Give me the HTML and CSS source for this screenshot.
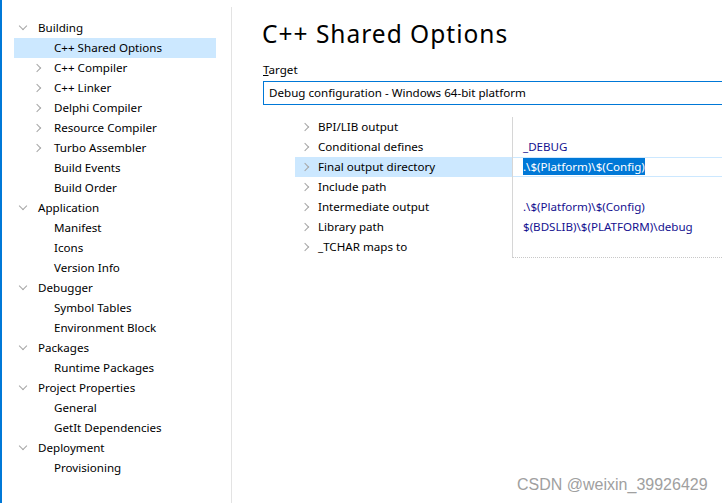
FILE: index.html
```html
<!DOCTYPE html>
<html lang="en">
<head>
    <meta charset="UTF-8">
    <title>C++ Shared Options</title>
    <link rel="stylesheet" href="styles.css">
</head>
<body>
    <div class="sidebar">
        <ul class="tree">
            <li class="node open">Building</li>
            <li class="leaf selected">C++ Shared Options</li>
            <li class="leaf closed">C++ Compiler</li>
            <li class="leaf closed">C++ Linker</li>
            <li class="leaf closed">Delphi Compiler</li>
            <li class="leaf closed">Resource Compiler</li>
            <li class="leaf closed">Turbo Assembler</li>
            <li class="leaf">Build Events</li>
            <li class="leaf">Build Order</li>
            <li class="node open">Application</li>
            <li class="leaf">Manifest</li>
            <li class="leaf">Icons</li>
            <li class="leaf">Version Info</li>
            <li class="node open">Debugger</li>
            <li class="leaf">Symbol Tables</li>
            <li class="leaf">Environment Block</li>
            <li class="node open">Packages</li>
            <li class="leaf">Runtime Packages</li>
            <li class="node open">Project Properties</li>
            <li class="leaf">General</li>
            <li class="leaf">GetIt Dependencies</li>
            <li class="node open">Deployment</li>
            <li class="leaf">Provisioning</li>
        </ul>
    </div>
    <div class="splitter"></div>

    <div class="main">
        <h1 class="title">C++ Shared Options</h1>
        <label class="field-label"><u>T</u>arget</label>
        <div class="combo">Debug configuration - Windows 64-bit platform</div>

        <div class="grid">
            <div class="names">
                <div class="prop">BPI/LIB output</div>
                <div class="prop">Conditional defines</div>
                <div class="prop selected">Final output directory</div>
                <div class="prop">Include path</div>
                <div class="prop">Intermediate output</div>
                <div class="prop">Library path</div>
                <div class="prop">_TCHAR maps to</div>
            </div>
            <div class="values">
                <div class="val"></div>
                <div class="val">_DEBUG</div>
                <div class="val editing"><span class="sel">.\$(Platform)\$(Config)</span></div>
                <div class="val"></div>
                <div class="val">.\$(Platform)\$(Config)</div>
                <div class="val">$(BDSLIB)\$(PLATFORM)\debug</div>
                <div class="val"></div>
            </div>
        </div>
    </div>

    <div class="watermark">CSDN @weixin_39926429</div>
</body>
</html>
```

FILE: styles.css
```css
html, body {
    margin: 0;
    padding: 0;
}

body {
    width: 722px;
    height: 503px;
    overflow: hidden;
    display: flex;
    background: #fff;
    color: #000;
    font-family: "Noto Sans", "Open Sans", sans-serif;
    font-size: 11.6px;
    position: relative;
}

/* left tree */
.sidebar {
    width: 229px;
    flex: none;
    border-left: 2px solid #0078d7;
}

.tree {
    list-style: none;
    margin: 18px 0 0 12px;
    padding: 0;
    width: 202px;
}

.tree li {
    height: 20px;
    line-height: 20px;
    position: relative;
    white-space: nowrap;
}

.tree .node {
    padding-left: 24px;
}

.tree .leaf {
    padding-left: 40px;
}

.tree .selected {
    background: #cce8ff;
}

/* chevrons drawn from two borders of a rotated box */
.tree .open::before,
.tree .closed::before,
.prop::before {
    content: "";
    position: absolute;
    width: 5px;
    height: 5px;
    border-right: 1px solid #a6a6a6;
    border-bottom: 1px solid #a6a6a6;
}

.tree .open::before {
    left: 6px;
    top: 5px;
    transform: rotate(45deg);
}

.tree .closed::before,
.prop::before {
    left: 20px;
    top: 7px;
    transform: rotate(-45deg);
}

.splitter {
    width: 1px;
    flex: none;
    margin-top: 7px;
    background: #e3e3e3;
}

/* right page */
.main {
    flex: 1;
    padding-left: 30px;
    min-width: 0;
}

.title {
    margin: 18px 0 0 0;
    font-size: 24.5px;
    letter-spacing: 1px;
    font-weight: normal;
    line-height: 32px;
}

.field-label {
    display: block;
    margin: 12px 0 0 1px;
    line-height: 16px;
}

.combo {
    margin: 3px 0 0 1px;
    height: 22px;
    line-height: 22px;
    border: 1px solid #0078d7;
    border-right: none;
    padding-left: 5px;
    white-space: nowrap;
}

.grid {
    display: flex;
    margin: 12px 0 0 33px;
}

.names {
    width: 217px;
    flex: none;
}

.prop {
    height: 20px;
    line-height: 20px;
    padding-left: 23px;
    position: relative;
    white-space: nowrap;
}

.prop::before {
    left: 7px;
}

.prop.selected {
    background: #cce8ff;
}

.values {
    flex: 1;
    border-left: 1px solid #d6d6d6;
    border-bottom: 1px dotted #c8c8c8;
}

.val {
    height: 20px;
    line-height: 20px;
    padding-left: 10px;
    color: #141190;
    white-space: nowrap;
    box-sizing: border-box;
}

.val.editing {
    border-top: 1px solid #cce8ff;
    border-bottom: 1px solid #cce8ff;
    line-height: 18px;
}

.sel {
    background: #0078d7;
    color: #fff;
    padding: 1px 0;
}

.watermark {
    position: absolute;
    left: 517px;
    top: 476px;
    font-family: "Liberation Sans", Arial, sans-serif;
    font-size: 16px;
    color: #a0a0a0;
}
```
